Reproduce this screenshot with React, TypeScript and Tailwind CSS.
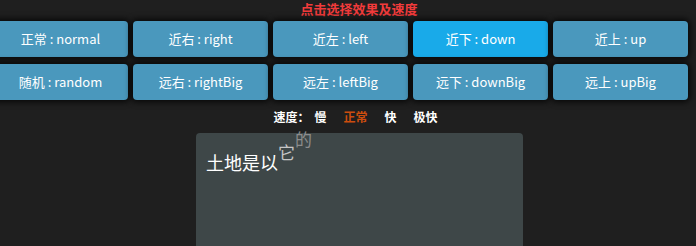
import { useState } from 'react';

const effects = [
  ['正常 : normal', '近右 : right', '近左 : left', '近下 : down', '近上 : up'],
  ['随机 : random', '远右 : rightBig', '远左 : leftBig', '远下 : downBig', '远上 : upBig'],
];

const speeds = ['慢', '正常', '快', '极快'];

export default function App() {
  const [active, setActive] = useState('近下 : down');
  const [speed, setSpeed] = useState('正常');

  return (
    <div
      className="w-[696px] h-[246px] overflow-hidden bg-[#1f1f1f] text-white"
      style={{ fontFamily: '"Noto Sans CJK SC", "Noto Sans", sans-serif' }}
    >
      {/* Title */}
      <div className="h-[21px] flex justify-center pl-[22px] text-[13px] leading-[18px] font-bold text-[#f23b3b]">
        点击选择效果及速度
      </div>

      {/* Effect buttons */}
      <div className="flex flex-col gap-[7px]">
        {effects.map((row, i) => (
          <div key={i} className="flex gap-[5px] ml-[-7px]">
            {row.map((label) => (
              <button
                key={label}
                onClick={() => setActive(label)}
                className={`w-[135px] h-[36px] shrink-0 rounded-[4px] text-[13px] text-white shadow-[0_0_6px_2px_rgba(0,0,0,0.8)] ${
                  active === label ? 'bg-[#19aae9]' : 'bg-[#4a98bd]'
                }`}
              >
                {label}
              </button>
            ))}
          </div>
        ))}
      </div>

      {/* Speed */}
      <div className="h-[33px] flex items-center justify-center pl-[15px] text-[12px] font-bold">
        <span>速度：</span>
        {speeds.map((s, i) => (
          <span
            key={s}
            onClick={() => setSpeed(s)}
            className={`cursor-pointer ${i === 0 ? 'ml-[5px]' : 'ml-[17px]'} ${
              speed === s ? 'text-[#cc4d0e]' : 'text-white'
            }`}
          >
            {s}
          </span>
        ))}
      </div>

      {/* Text stage */}
      <div className="ml-[196px] w-[327px] h-[120px] rounded-[4px] bg-[#3e4748] pl-[10px] pt-[17px]">
        <p className="text-[18px] leading-[24px] text-white whitespace-nowrap">
          土地是以
          <span className="inline-block -translate-y-[11px] text-[17px] text-[#c6c6c6]">它</span>
          <span className="inline-block -translate-y-[24px] text-[17px] text-[#8c8c8c]">的</span>
        </p>
      </div>
    </div>
  );
}
